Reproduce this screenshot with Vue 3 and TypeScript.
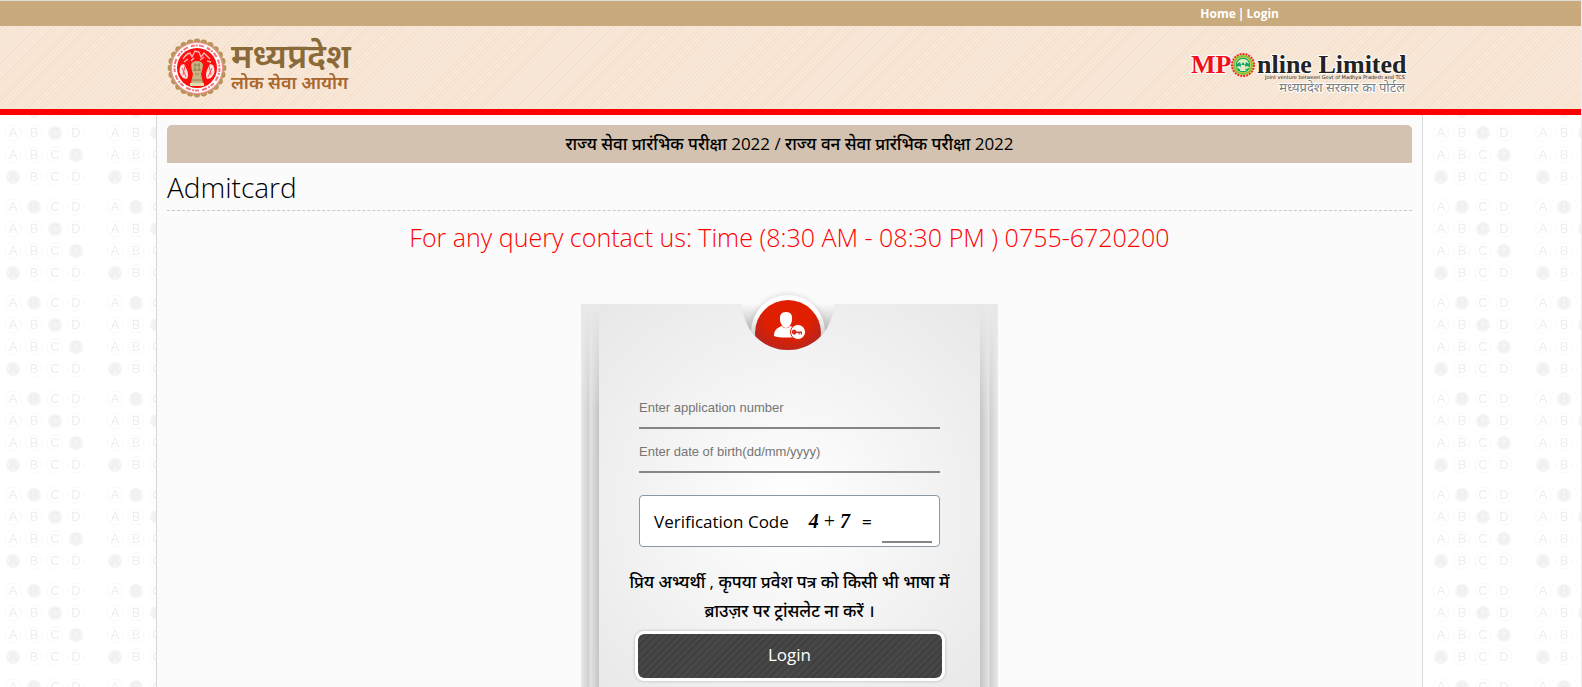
<script setup lang="ts">
import { ref } from 'vue'

const applicationNumber = ref('')
const birthDate = ref('')
const answer = ref('')

const letters = ['A', 'B', 'C', 'D']
const filledColumns = [1, 2, 3, 0]
const scallops = Array.from({ length: 24 }, (_, i) => {
  const angle = (i * Math.PI) / 12
  return { x: 30 + 26 * Math.cos(angle), y: 30 + 26 * Math.sin(angle) }
})
</script>

<template>
  <div class="page">
    <svg class="sheet" aria-hidden="true">
      <defs>
        <pattern id="answers" width="102" height="96" y="3" patternUnits="userSpaceOnUse">
          <g v-for="(filled, row) in filledColumns" :key="row">
            <template v-for="(letter, col) in letters" :key="letter">
              <circle
                :cx="13 + col * 21"
                :cy="11 + row * 22"
                :r="filled === col ? 7 : 8"
                :fill="filled === col ? '#f4f4f4' : 'none'"
                :stroke="filled === col ? 'none' : '#faf8f8'"
              />
              <text :x="13 + col * 21" :y="15 + row * 22" text-anchor="middle">{{ letter }}</text>
            </template>
          </g>
        </pattern>
      </defs>
      <rect width="100%" height="100%" fill="url(#answers)" />
    </svg>

    <nav class="topbar">
      <a href="#">Home</a><span>|</span><a href="#">Login</a>
    </nav>

    <header class="banner">
      <div class="brand">
        <svg class="seal" viewBox="0 0 60 60" aria-hidden="true">
          <circle v-for="(s, i) in scallops" :key="i" :cx="s.x" :cy="s.y" r="3.4" fill="#b9935a" />
          <circle cx="30" cy="30" r="26.5" fill="#c8a36d" />
          <circle cx="30" cy="30" r="25.5" fill="#fff" stroke="#f58a90" stroke-width="1" />
          <circle cx="30" cy="30" r="22.500" fill="none" stroke="#f0757b" stroke-width="2" stroke-dasharray="4 1 2 1.5 5 3" />
          <circle cx="30" cy="30" r="20" fill="#fd0d0d" />
          <path d="M16 21q3-5 7-6l2 4 3-6 4 1 2 5 3-4 6 6M17 24l4-3m3 2 3-3m6 2 4-3m3 4 4 1" fill="none" stroke="#ffb8b8" stroke-width="1.3" />
          <path d="M14 27q-4 7 2 13l4 1q2-4 0-9l-3-6zM46 27q4 7-2 13l-4 1q-2-4 0-9l3-6z" fill="#fde0de" />
          <path d="M15 30l4 9M18 28l-2 9M45 30l-4 9M42 28l2 9" stroke="#f44" stroke-width="0.900" />
          <path d="M24 27q1-4 6-4t6 4l-1 6-1 3 2 9H24l2-9-1-3z" fill="#c8b584" />
          <path d="M27 27h6M26 32h8M28 36h4M25 42h10M28 25v8M32 25v8" stroke="#94804f" stroke-width="1" />
          <path d="M23 45h14v3H23z" fill="#e5d9b0" />
        </svg>
        <div class="brand-text">
          <strong>मध्यप्रदेश</strong>
          <span>लोक सेवा आयोग</span>
        </div>
      </div>
      <svg class="portal" viewBox="0 0 220 54" role="img" aria-label="MPOnline Limited">
        <text class="portal-hindi" x="215" y="51" text-anchor="end">मध्यप्रदेश सरकार का पोर्टल</text>
        <text class="serif red" x="1" y="32">MP</text>
        <text class="serif" x="67" y="32">nline Limited</text>
        <text class="venture" x="215" y="38" text-anchor="end">Joint venture between Govt of Madhya Pradesh and TCS</text>
        <circle cx="53" cy="24" r="11" fill="#ffe14a" stroke="#e8263a" stroke-width="2" stroke-dasharray="2 1" />
        <circle cx="53" cy="24" r="9" fill="none" stroke="#7fc241" stroke-width="2" />
        <circle cx="53" cy="24" r="7.400" fill="#13a36b" />
        <path d="M47 23q1-5 6-5t6 5l-3-2-1 3-2-3-2 3-1-3zM46 26l4-1 1 4zM60 26l-4-1-1 4zM51 24h4l1 6h-6z" fill="#e3edc4" />
      </svg>
    </header>

    <main class="content">
      <h1 class="exam">राज्य सेवा प्रारंभिक परीक्षा 2022 / राज्य वन सेवा प्रारंभिक परीक्षा 2022</h1>
      <h2 class="heading">Admitcard</h2>
      <p class="query">For any query contact us: Time (8:30 AM - 08:30 PM ) 0755-6720200</p>

      <form class="panel" @submit.prevent>
        <svg class="badge" viewBox="1 0 120 74" aria-hidden="true">
          <defs>
            <linearGradient id="notch" x1="0" y1="0" x2="0" y2="1">
              <stop offset="0.5" stop-color="#fbfbfb" />
              <stop offset="1" stop-color="#8d8d8d" />
            </linearGradient>
            <radialGradient id="ruby" cx="0.5" cy="0.2" r="0.7">
              <stop offset="0.5" stop-color="#e01f00" />
              <stop offset="1" stop-color="#a8282a" />
            </radialGradient>
            <linearGradient id="rim" x1="0" y1="0" x2="0" y2="1">
              <stop offset="0.25" stop-color="#fff" />
              <stop offset="0.6" stop-color="#c9c9c9" />
            </linearGradient>
            <clipPath id="pocket">
              <path d="M0 0H120V24H106A46 46 0 0 1 14 24H0Z" />
            </clipPath>
            <filter id="glow"><feGaussianBlur stdDeviation="2.5" /></filter>
          </defs>
          <g clip-path="url(#pocket)">
            <circle cx="60" cy="24" r="46" fill="url(#notch)" />
            <circle cx="60" cy="52" r="38" fill="#999" opacity="0.3" filter="url(#glow)" />
            <circle cx="60" cy="52" r="37" fill="url(#rim)" />
            <circle cx="60" cy="53" r="33" fill="url(#ruby)" />
          </g>
          <path d="M58 32c5 0 6.500 3 6 8-.5 4-3 8-6 8s-5.500-4-6-8c-.5-5 1-8 6-8z" fill="#fff" />
          <path d="M46 56c0-5 2-8 8-10 2 3 6 3 8 0 6 2 9 5 9 10-5 2-20 2-25 0z" fill="#fff" />
          <circle cx="70" cy="52" r="7.500" fill="#fff" stroke="#e01f00" />
          <path d="M66 49.500a2.500 2.500 0 1 0 2.500 3.500h2v1.500h1.200V53h1v1.500H74v-3h-5.500a2.500 2.500 0 0 0-2.500-2z" fill="#d52b20" />
        </svg>

        <div class="fields">
          <input v-model="applicationNumber" class="line" type="text" placeholder="Enter application number" aria-label="Enter application number" />
          <input v-model="birthDate" class="line" type="text" placeholder="Enter date of birth(dd/mm/yyyy)" aria-label="Enter date of birth(dd/mm/yyyy)" />
          <div class="verify">
            <label for="answer">Verification Code</label>
            <span class="sum"><i>4</i> + <i>7</i></span>
            <span class="equals">=</span>
            <input id="answer" v-model="answer" type="text" />
          </div>
        </div>

        <p class="notice">प्रिय अभ्यर्थी , कृपया प्रवेश पत्र को किसी भी भाषा में ब्राउज़र पर ट्रांसलेट ना करें ।</p>
        <button class="login" type="submit">Login</button>
      </form>
    </main>
  </div>
</template>

<style>
html,
body {
  height: 100%;
  overflow: hidden;
}

#app {
  height: 100%;
}
</style>

<style scoped>
.page {
  position: relative;
  isolation: isolate;
  box-sizing: border-box;
  display: flex;
  flex-direction: column;
  min-height: 100%;
  border-top: 1px solid #dcdcdc;
  border-right: 1px solid #ececec;
  background: #fff;
  color: #000;
  font-family: 'Open Sans', 'Noto Sans', 'Noto Sans Devanagari', sans-serif;
}

.sheet {
  position: absolute;
  z-index: -1;
  inset: 0;
  width: 100%;
  height: 100%;
}

.sheet text {
  fill: #eeeeee;
  font: 13px 'Liberation Sans', sans-serif;
}

.topbar {
  display: flex;
  justify-content: flex-end;
  gap: 2px;
  padding-right: 302px;
  background: #c9aa7c;
  color: #fff;
  font-size: 12px;
  font-weight: 700;
  line-height: 25px;
}

.topbar a {
  color: inherit;
  text-decoration: none;
}

.banner {
  display: flex;
  align-items: center;
  justify-content: space-between;
  height: 83px;
  padding: 0 171px 0 167px;
  border-bottom: 6px solid #f00;
  background: repeating-linear-gradient(135deg, #f9e8d7 0 2px, #f4e1cd 2px 3px);
}

.brand {
  display: flex;
  align-items: center;
  gap: 4px;
}

.seal {
  width: 60px;
  height: 60px;
}

.brand-text {
  display: flex;
  flex-direction: column;
  gap: 2px;
  padding-bottom: 6px;
  color: #8a6a38;
}

.brand-text strong {
  font-size: 34px;
  font-weight: 600;
  line-height: 32px;
}

.brand-text span {
  color: #a9672d;
  font-size: 18px;
  font-weight: 600;
  line-height: 18px;
}

.portal {
  width: 220px;
  height: 54px;
}

.serif,
.portal-hindi {
  paint-order: stroke;
  stroke: #fff;
  stroke-width: 2px;
}

.serif {
  fill: #222;
  font: bold 26px 'Liberation Serif', serif;
}

.serif.red {
  fill: #f01018;
}

.venture {
  fill: #222;
  font: 5px 'DejaVu Sans', sans-serif;
}

.portal-hindi {
  fill: #7c7c7c;
  font-size: 13px;
}

.content {
  flex: 1;
  margin: 0 158px 0 156px;
  padding: 10px 10px 0;
  border: 1px solid #d8d8d8;
  border-width: 0 1px;
  background: #fbfbfb;
}

.exam {
  margin: 0;
  border-radius: 5px 5px 0 0;
  background: #d2c2af;
  font-size: 17px;
  font-weight: 500;
  line-height: 38px;
  text-align: center;
}

.heading {
  margin: 0;
  padding-top: 2px;
  border-bottom: 1px dashed #c9c9c9;
  font-size: 28px;
  font-weight: 300;
  line-height: 45px;
}

.query {
  margin: 0;
  padding-bottom: 2px;
  color: #f00;
  font-size: 25px;
  font-weight: 300;
  line-height: 52px;
  text-align: center;
}

.panel {
  position: relative;
  box-sizing: border-box;
  display: flex;
  flex-direction: column;
  align-items: center;
  width: 417px;
  max-width: 100%;
  margin: 39px auto 0;
  padding: 83px 18px 6px;
  background:
    linear-gradient(#e9e9e9, transparent 110px) left / 18px 100% no-repeat,
    linear-gradient(#e9e9e9, transparent 110px) right / 18px 100% no-repeat,
    linear-gradient(90deg, #e9e9e9, #cfcfcf 8px, #e4e4e4 9px, #c4c4c4 18px) left / 18px 100% no-repeat,
    linear-gradient(270deg, #e9e9e9, #cfcfcf 8px, #e4e4e4 9px, #c4c4c4 18px) right / 18px 100% no-repeat,
    radial-gradient(circle at 50% 200px, #fff, #e7e7e7 280px);
}

.badge {
  position: absolute;
  top: -24px;
  left: calc(50% - 61px);
  width: 120px;
  height: 74px;
}

.fields {
  width: 301px;
}

.line {
  box-sizing: border-box;
  display: block;
  width: 100%;
  height: 42px;
  margin-bottom: 2px;
  padding: 0;
  border: 0;
  border-bottom: 2px solid #858585;
  outline: 0;
  background: transparent;
  font: 13px 'Liberation Sans', sans-serif;
}

.line::placeholder {
  color: #757575;
}

.verify {
  box-sizing: border-box;
  display: flex;
  align-items: center;
  height: 52px;
  margin-top: 22px;
  padding: 0 7px 0 14px;
  border: 1px solid #8b97a3;
  border-radius: 4px;
  background: #fff;
  font-size: 17px;
  font-weight: 400;
}

.sum {
  margin-left: 20px;
  font: 20px 'Liberation Serif', serif;
}

.sum i {
  font-weight: bold;
}

.equals {
  margin-left: 12px;
  font-weight: 600;
}

.verify input {
  box-sizing: border-box;
  width: 50px;
  height: 44px;
  margin-left: auto;
  border: 0;
  border-bottom: 2px solid #858585;
  outline: 0;
  background: transparent;
}

.notice {
  width: 330px;
  margin: 20px 0 6px;
  font-size: 17px;
  font-weight: 500;
  line-height: 29px;
  text-align: center;
}

.login {
  box-sizing: border-box;
  width: 310px;
  height: 50px;
  padding: 0 0 3px;
  border: 3px solid #fff;
  border-radius: 9px;
  background: repeating-linear-gradient(135deg, #474747 0 3px, #3f3f3f 3px 5px) padding-box;
  box-shadow: 0 0 3px #b0b0b0;
  color: #fff;
  font: 17px 'Open Sans', sans-serif;
}
</style>
